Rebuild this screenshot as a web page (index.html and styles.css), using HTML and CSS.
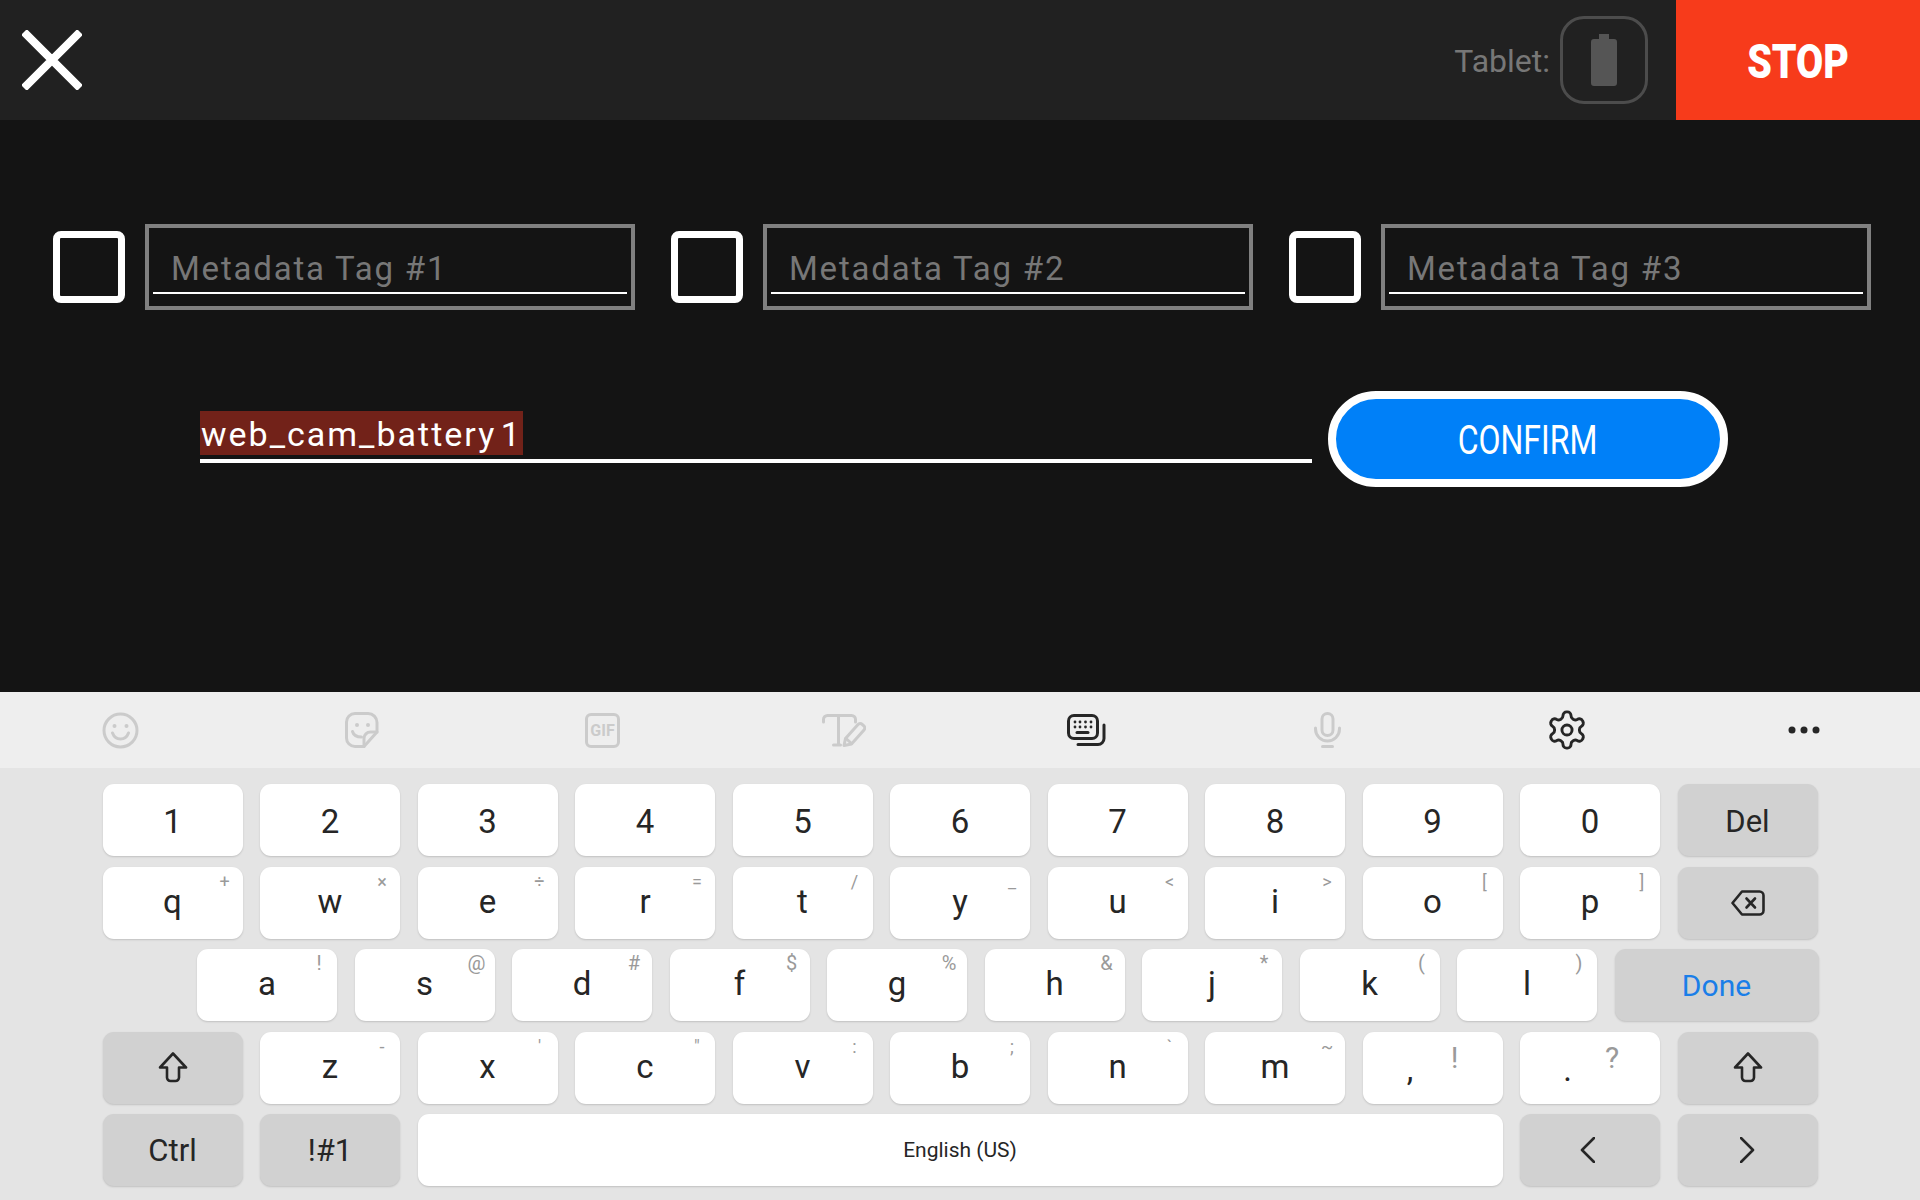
FILE: index.html
```html
<!DOCTYPE html>
<html lang="en">
<head>
    <meta charset="UTF-8">
    <title>Metadata Tags</title>
    <link rel="stylesheet" href="styles.css">
</head>
<body>
    <div class="topbar">
        <svg class="close-icon" viewBox="0 0 60 60"><path d="M2 2L58 58M58 2L2 58"/></svg>
        <div class="tablet-label">Tablet:</div>
        <div class="battery-frame">
            <svg class="battery-icon" viewBox="0 0 26 52"><path d="M8 0h10v5h5a3 3 0 0 1 3 3v41a3 3 0 0 1-3 3H3a3 3 0 0 1-3-3V8a3 3 0 0 1 3-3h5z"/></svg>
        </div>
        <div class="stop-button"><span>STOP</span></div>
    </div>

    <div class="main">
        <div class="tag-row">
            <div class="tag-group">
                <div class="checkbox"></div>
                <div class="tag-box"><div class="tag-text">Metadata Tag #1</div></div>
            </div>
            <div class="tag-group">
                <div class="checkbox"></div>
                <div class="tag-box"><div class="tag-text">Metadata Tag #2</div></div>
            </div>
            <div class="tag-group">
                <div class="checkbox"></div>
                <div class="tag-box"><div class="tag-text">Metadata Tag #3</div></div>
            </div>
        </div>
        <div class="name-row">
            <div class="name-field"><span class="name-selected">web_cam_battery 1</span></div>
            <div class="confirm-button"><span>CONFIRM</span></div>
        </div>
    </div>

    <div class="keyboard">
        <div class="toolbar">
            <div class="tool">
                <svg class="icon-light" width="37" height="37" viewBox="0 0 37 37"><circle cx="18.5" cy="18.5" r="16.5"/><path d="M10.5 21c1.5 4 4.5 6 8 6s6.500-2 8-6"/><circle class="dot-light" cx="12.500" cy="14" r="2"/><circle class="dot-light" cx="24.500" cy="14" r="2"/></svg>
            </div>
            <div class="tool">
                <svg class="icon-light" width="34" height="36" viewBox="0 0 34 36"><path d="M10 1.500h13a9 9 0 0 1 9 9V20L19 34.500h-9a8.500 8.500 0 0 1-8.500-8.500V10A8.500 8.500 0 0 1 10 1.500z"/><path d="M32 20h-6.500a6.500 6.500 0 0 0-6.500 6.500v8"/><path d="M7.500 19.500c1 3.500 4 5.500 9 5.500"/><circle class="dot-light" cx="12" cy="13" r="2"/><circle class="dot-light" cx="23" cy="13" r="2"/></svg>
            </div>
            <div class="tool"><div class="gif-icon">GIF</div></div>
            <div class="tool">
                <svg class="icon-light" width="44" height="33" viewBox="0 0 44 33"><path d="M1.500 8V5.500a4 4 0 0 1 4-4h24a4 4 0 0 1 4 4V8"/><path d="M16.500 1.500V31M11.500 31h7"/><path d="M22 31.500l1.500-7L36 10.500a3 3 0 0 1 4.200-.2l1.600 1.500a3 3 0 0 1 .2 4.200L29.500 30z"/><path d="M24 24.500l5.500 5"/></svg>
            </div>
            <div class="tool tool-nudge">
                <svg class="icon-dark" width="39" height="32" viewBox="0 0 39 32"><rect x="1.500" y="1.500" width="29" height="23" rx="5.500"/><path d="M11 30.500h20a6 6 0 0 0 6-6V11"/><path class="key-bar" d="M10 18.500h11"/><g class="dot-dark"><circle cx="8" cy="8" r="1.400"/><circle cx="13" cy="8" r="1.400"/><circle cx="18.500" cy="8" r="1.400"/><circle cx="24" cy="8" r="1.400"/><circle cx="8" cy="13" r="1.400"/><circle cx="13" cy="13" r="1.400"/><circle cx="18.500" cy="13" r="1.400"/><circle cx="24" cy="13" r="1.400"/></g></svg>
            </div>
            <div class="tool tool-nudge">
                <svg class="icon-light" width="27" height="36" viewBox="0 0 27 36"><rect x="8" y="1.500" width="11" height="22" rx="5.500"/><path d="M1.500 16v1a12 12 0 0 0 24 0v-1"/><path d="M8.500 34.500h10"/></svg>
            </div>
            <div class="tool">
                <svg class="icon-dark" width="38" height="40" viewBox="1.500 1.500 21 21"><path class="gear-line" d="M12.220 2h-.44a2 2 0 0 0-2 2v.18a2 2 0 0 1-1 1.730l-.43.25a2 2 0 0 1-2 0l-.15-.08a2 2 0 0 0-2.730.73l-.22.38a2 2 0 0 0 .73 2.730l.15.1a2 2 0 0 1 1 1.720v.51a2 2 0 0 1-1 1.740l-.15.09a2 2 0 0 0-.73 2.730l.22.38a2 2 0 0 0 2.730.73l.15-.08a2 2 0 0 1 2 0l.43.25a2 2 0 0 1 1 1.730V20a2 2 0 0 0 2 2h.44a2 2 0 0 0 2-2v-.18a2 2 0 0 1 1-1.730l.43-.25a2 2 0 0 1 2 0l.15.08a2 2 0 0 0 2.730-.73l.22-.39a2 2 0 0 0-.73-2.730l-.15-.08a2 2 0 0 1-1-1.740v-.5a2 2 0 0 1 1-1.740l.15-.09a2 2 0 0 0 .73-2.730l-.22-.38a2 2 0 0 0-2.730-.73l-.15.08a2 2 0 0 1-2 0l-.43-.25a2 2 0 0 1-1-1.730V4a2 2 0 0 0-2-2z"/><circle class="gear-line" cx="12" cy="12" r="2.800"/></svg>
            </div>
            <div class="tool tool-more">
                <svg class="dot-dark" width="32" height="8" viewBox="0 0 32 8"><circle cx="4" cy="4" r="3.500"/><circle cx="16" cy="4" r="3.500"/><circle cx="28" cy="4" r="3.500"/></svg>
            </div>
        </div>

        <div class="keys">
            <div class="row row-num">
                <div class="key">1</div>
                <div class="key">2</div>
                <div class="key">3</div>
                <div class="key">4</div>
                <div class="key">5</div>
                <div class="key">6</div>
                <div class="key">7</div>
                <div class="key">8</div>
                <div class="key">9</div>
                <div class="key">0</div>
                <div class="key key-fn key-label">Del</div>
            </div>
            <div class="row row-raise">
                <div class="key">q<span class="hint">+</span></div>
                <div class="key">w<span class="hint">×</span></div>
                <div class="key">e<span class="hint">÷</span></div>
                <div class="key">r<span class="hint">=</span></div>
                <div class="key">t<span class="hint">/</span></div>
                <div class="key">y<span class="hint">_</span></div>
                <div class="key">u<span class="hint">&lt;</span></div>
                <div class="key">i<span class="hint">&gt;</span></div>
                <div class="key">o<span class="hint">[</span></div>
                <div class="key">p<span class="hint">]</span></div>
                <div class="key key-fn">
                    <svg class="icon-key" width="34" height="26" viewBox="0 0 34 26"><path d="M11 1.500h17.500a4 4 0 0 1 4 4v15a4 4 0 0 1-4 4H11L1.500 13z"/><path d="M15.500 8.500l8.500 9M24 8.500l-8.500 9"/></svg>
                </div>
            </div>
            <div class="row row-home">
                <div class="key">a<span class="hint">!</span></div>
                <div class="key">s<span class="hint">@</span></div>
                <div class="key">d<span class="hint">#</span></div>
                <div class="key">f<span class="hint">$</span></div>
                <div class="key">g<span class="hint">%</span></div>
                <div class="key">h<span class="hint">&amp;</span></div>
                <div class="key">j<span class="hint">*</span></div>
                <div class="key">k<span class="hint">(</span></div>
                <div class="key">l<span class="hint">)</span></div>
                <div class="key key-fn key-done">Done</div>
            </div>
            <div class="row row-raise">
                <div class="key key-fn">
                    <svg class="icon-key" width="30" height="31" viewBox="0 0 30 31"><path d="M15 1.500L28 15.500h-7v10a3.500 3.500 0 0 1-3.500 3.500h-5A3.500 3.500 0 0 1 9 25.500v-10H2z"/></svg>
                </div>
                <div class="key">z<span class="hint">-</span></div>
                <div class="key">x<span class="hint">'</span></div>
                <div class="key">c<span class="hint">"</span></div>
                <div class="key">v<span class="hint">:</span></div>
                <div class="key">b<span class="hint">;</span></div>
                <div class="key">n<span class="hint">`</span></div>
                <div class="key">m<span class="hint">~</span></div>
                <div class="key key-punct">,<span class="hint hint-big">!</span></div>
                <div class="key key-punct">.<span class="hint hint-big">?</span></div>
                <div class="key key-fn">
                    <svg class="icon-key" width="30" height="31" viewBox="0 0 30 31"><path d="M15 1.500L28 15.500h-7v10a3.500 3.500 0 0 1-3.500 3.500h-5A3.500 3.500 0 0 1 9 25.500v-10H2z"/></svg>
                </div>
            </div>
            <div class="row">
                <div class="key key-fn key-label">Ctrl</div>
                <div class="key key-fn key-label">!#1</div>
                <div class="key key-space">English (US)</div>
                <div class="key key-fn">
                    <svg class="icon-key arrow-left" width="15" height="26" viewBox="0 0 15 26"><path d="M14 1L2 13l12 12"/></svg>
                </div>
                <div class="key key-fn">
                    <svg class="icon-key" width="15" height="26" viewBox="0 0 15 26"><path d="M1 1l12 12L1 25"/></svg>
                </div>
            </div>
        </div>
    </div>
</body>
</html>
```

FILE: styles.css
```css
html, body {
    margin: 0;
    padding: 0;
}
body {
    width: 1920px;
    height: 1200px;
    overflow: hidden;
    background-color: #141414;
    font-family: Roboto, "Liberation Sans", sans-serif;
    display: flex;
    flex-direction: column;
}

/* top bar */
.topbar {
    height: 120px;
    background-color: #212121;
    display: flex;
    align-items: center;
}
.close-icon {
    width: 60px;
    height: 60px;
    margin-left: 22px;
    margin-right: auto;
}
.close-icon path {
    stroke: #ffffff;
    stroke-width: 8;
    fill: none;
}
.tablet-label {
    color: #777777;
    font-size: 32px;
    padding-top: 2px;
    margin-right: 10px;
}
.battery-frame {
    box-sizing: border-box;
    width: 88px;
    height: 88px;
    border: 3px solid #4c4c4c;
    border-radius: 24px;
    margin-right: 28px;
    display: flex;
    align-items: center;
    justify-content: center;
}
.battery-icon {
    width: 26px;
    height: 52px;
}
.battery-icon path {
    fill: #555555;
}
.stop-button {
    box-sizing: border-box;
    width: 244px;
    height: 120px;
    padding-top: 2px;
    background-color: #f73b1b;
    color: #ffffff;
    font-size: 48px;
    font-weight: 900;
    display: flex;
    align-items: center;
    justify-content: center;
}
.stop-button span {
    display: inline-block;
    transform: scaleX(0.82);
}

/* main form */
.main {
    height: 572px;
}
.tag-row {
    display: flex;
    gap: 36px;
    padding: 104px 0 0 53px;
}
.tag-group {
    display: flex;
    align-items: center;
    gap: 20px;
}
.checkbox {
    box-sizing: border-box;
    width: 72px;
    height: 72px;
    border: 7px solid #ffffff;
    border-radius: 8px;
}
.tag-box {
    box-sizing: border-box;
    width: 490px;
    height: 86px;
    border: 4px solid #808080;
    padding: 0 4px;
}
.tag-text {
    height: 66px;
    box-sizing: border-box;
    border-bottom: 2px solid #ffffff;
    color: #777777;
    font-size: 33px;
    letter-spacing: 1.8px;
    line-height: 38px;
    padding: 22px 0 0 18px;
}
.name-row {
    display: flex;
    align-items: flex-start;
    gap: 16px;
    padding: 81px 0 0 200px;
}
.name-field {
    box-sizing: border-box;
    width: 1112px;
    height: 52px;
    margin-top: 20px;
    border-bottom: 4px solid #ffffff;
}
.name-selected {
    display: inline-block;
    height: 44px;
    line-height: 47px;
    background-color: #722219;
    color: #ffffff;
    font-size: 34px;
    letter-spacing: 2px;
    word-spacing: -6px;
    padding: 0 1px;
}
.confirm-button {
    box-sizing: border-box;
    width: 400px;
    height: 96px;
    padding-top: 2px;
    border: 8px solid #ffffff;
    border-radius: 48px;
    background-color: #0080f8;
    color: #ffffff;
    font-size: 41px;
    display: flex;
    align-items: center;
    justify-content: center;
}
.confirm-button span {
    display: inline-block;
    transform: scaleX(0.78);
}

/* keyboard */
.keyboard {
    flex: 1;
    background-color: #e4e4e4;
}
.toolbar {
    height: 76px;
    background-color: #eeeeee;
    display: grid;
    grid-template-columns: repeat(8, 241px);
    align-items: center;
    justify-items: center;
}
.tool {
    display: flex;
    align-items: center;
    justify-content: center;
}
.tool-nudge {
    margin-left: 3px;
}
.tool-more {
    margin-right: 7px;
}
.icon-light * {
    fill: none;
    stroke: #cbcbcb;
    stroke-width: 3;
    stroke-linecap: round;
    stroke-linejoin: round;
}
.icon-dark * {
    fill: none;
    stroke: #262626;
    stroke-width: 3;
    stroke-linecap: round;
    stroke-linejoin: round;
}
.icon-light .dot-light {
    fill: #cbcbcb;
    stroke: none;
}
.icon-dark .dot-dark,
.icon-dark .dot-dark * {
    fill: #262626;
    stroke: none;
}
.dot-dark circle {
    fill: #262626;
}
.icon-dark .gear-line {
    stroke-width: 1.6;
}
.gif-icon {
    box-sizing: border-box;
    width: 35px;
    height: 35px;
    border: 3px solid #cbcbcb;
    border-radius: 6px;
    color: #cbcbcb;
    font-size: 16px;
    font-weight: 700;
    display: flex;
    align-items: center;
    justify-content: center;
}
.keys {
    padding: 16px 0 0 102.5px;
    display: flex;
    flex-direction: column;
    gap: 10.5px;
}
.row {
    display: grid;
    grid-template-columns: repeat(11, 140px);
    column-gap: 17.5px;
}
.row-home {
    display: flex;
    gap: 17.5px;
    padding-left: 94.5px;
}
.row-home .key {
    width: 140px;
    box-sizing: border-box;
    padding-bottom: 4px;
}
.row-home .key-done {
    width: 204px;
    padding-bottom: 0;
}
.row-num .key {
    box-sizing: border-box;
    padding-top: 2px;
}
.row-raise .key {
    box-sizing: border-box;
    padding-bottom: 2px;
}
.key {
    position: relative;
    height: 72px;
    border-radius: 11px;
    background-color: #ffffff;
    box-shadow: 0 1px 2px rgba(0,0,0,0.16);
    color: #262626;
    font-size: 33px;
    display: flex;
    align-items: center;
    justify-content: center;
}
.row-raise .key-fn {
    padding-bottom: 0;
}
.key-fn {
    background-color: #d1d1d1;
}
.key-label {
    font-size: 31px;
}
.key-done {
    color: #1a7ee8;
    font-size: 30px;
}
.key-space {
    grid-column: span 7;
    font-size: 21px;
}
.row-raise .key-punct {
    padding: 4px 45px 0 0;
}
.hint {
    position: absolute;
    top: 4px;
    right: 7px;
    width: 22px;
    text-align: center;
    color: #9a9a9a;
    font-size: 18px;
    line-height: 22px;
}
.row-home .hint {
    font-size: 20px;
    top: 3px;
}
.hint-big {
    top: 11px;
    right: 37px;
    font-size: 30px;
    line-height: 30px;
}
.icon-key * {
    fill: none;
    stroke: #262626;
    stroke-width: 2.6;
    stroke-linejoin: round;
    stroke-linecap: round;
}
.arrow-left {
    margin-right: 5px;
}
```
